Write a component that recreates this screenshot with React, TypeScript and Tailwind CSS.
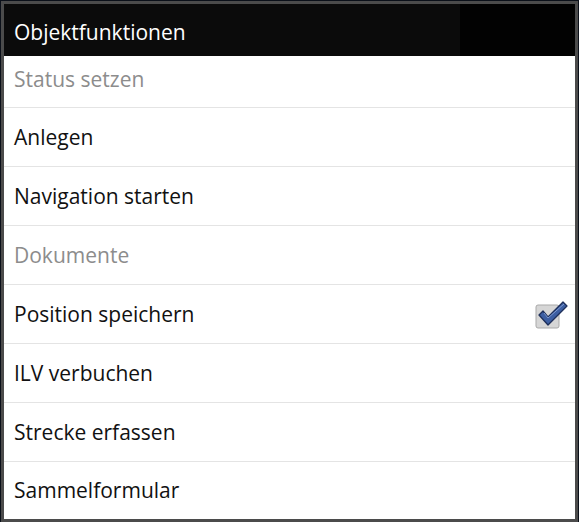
const items = [
  { label: "Status setzen", disabled: true },
  { label: "Anlegen" },
  { label: "Navigation starten" },
  { label: "Dokumente", disabled: true },
  { label: "Position speichern", checked: true },
  { label: "ILV verbuchen" },
  { label: "Strecke erfassen" },
  { label: "Sammelformular" },
];

function CheckIcon() {
  return (
    <svg width="34" height="30" viewBox="0 0 34 30" className="mr-[2px]">
      <rect x="1" y="6" width="23" height="23" rx="2" fill="#d6d6d6" stroke="#a9a9a9" />
      <path
        d="M4 16 L8 12 L13 18 L28 3 L32 7 L13 26 Z"
        fill="#3d5fa3"
        stroke="#1e2f5a"
        strokeWidth="1.3"
        strokeLinejoin="round"
      />
      <path d="M9 14 L13 19 L29 5" fill="none" stroke="#7f9ad0" strokeWidth="1" />
    </svg>
  );
}

export default function App() {
  return (
    <div
      className="w-[579px] h-[522px] bg-[#0b1019] pl-[1px] pt-[1px]"
      style={{ fontFamily: '"Open Sans", "DejaVu Sans", sans-serif' }}
    >
      <div className="w-[577px] h-[521px] border-[3px] border-[#4b4b4b] bg-white flex flex-col">
        <div className="h-[52px] shrink-0 flex items-center px-[10px] pt-[5px] bg-[linear-gradient(90deg,#0b0b0b_0px,#0b0b0b_456px,#020202_456px,#020202_100%)]">
          <span className="text-white text-[21px] leading-none">Objektfunktionen</span>
        </div>
        <div className="flex-1 flex flex-col">
          {items.map((item, i) => (
            <div
              key={item.label}
              className={
                "flex items-center justify-between pl-[10px] pr-[4px] border-[#e4e4e4] " +
                (i === 0 ? "h-[52px] border-b pb-[4px] " : i === items.length - 1 ? "flex-1 " : "h-[59px] border-b ")
              }
            >
              <span
                className={
                  "text-[21px] leading-none " + (item.disabled ? "text-[#8c8c8c]" : "text-[#111111]")
                }
              >
                {item.label}
              </span>
              {item.checked && <CheckIcon />}
            </div>
          ))}
        </div>
      </div>
    </div>
  );
}
